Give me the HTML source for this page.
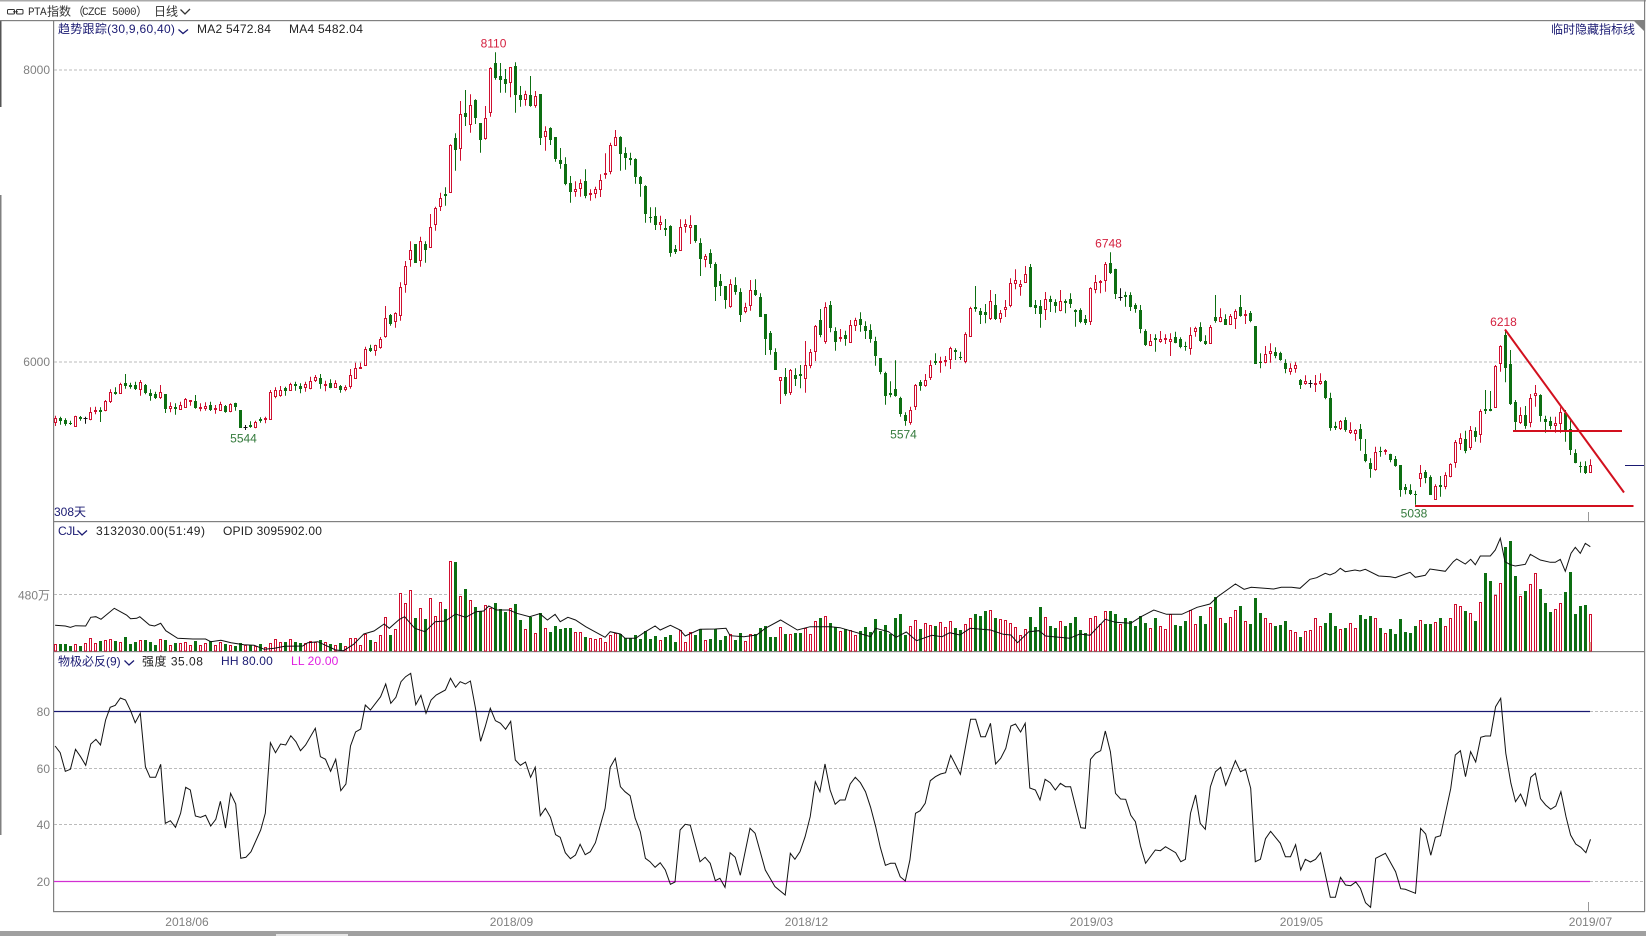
<!DOCTYPE html>
<html lang="zh">
<head>
<meta charset="utf-8">
<title>PTA指数</title>
<style>
html,body{margin:0;padding:0;background:#fff;width:1646px;height:936px;overflow:hidden}
svg{position:absolute;left:0;top:0;display:block}
text{font-family:"Liberation Sans","Noto Sans CJK SC",sans-serif;font-size:12px}
.g{fill:#808080}
.n{fill:#1a1a72}
.d{fill:#222}
.dt{fill:#808080;text-anchor:middle}
.rl{fill:#d4213f;text-anchor:middle}
.gl{fill:#347a3c;text-anchor:middle}
.m{font-family:"Liberation Mono","Noto Sans CJK SC",monospace;font-size:11px;letter-spacing:-.6px;fill:#333}
.c{font-family:"Noto Sans CJK SC",sans-serif;font-size:12px;fill:#333}
</style>
</head>
<body>
<svg width="1646" height="936" viewBox="0 0 1646 936" xmlns="http://www.w3.org/2000/svg">
<rect width="1646" height="936" fill="#fff"/>
<!-- frame -->
<rect x="0" y="0" width="1646" height="1.5" fill="#aaa"/>
<rect x="0" y="931" width="1646" height="5" fill="#a0a0a0"/>
<rect x="276" y="934" width="72" height="2" fill="#e6e6e6"/>
<rect x="0" y="20" width="1.5" height="87" fill="#555"/>
<rect x="0" y="195" width="1.5" height="640" fill="#808080"/>
<rect x="53" y="20" width="1.2" height="891.5" fill="#808080"/>
<rect x="1644" y="0" width="1.2" height="911.5" fill="#808080"/>
<rect x="0" y="20" width="1645" height="1.2" fill="#808080"/>
<rect x="53" y="521" width="1592" height="1.2" fill="#808080"/>
<rect x="53" y="651" width="1592" height="1.2" fill="#808080"/>
<rect x="53" y="911" width="1592" height="1.2" fill="#808080"/>
<polygon points="1634,21 1644,21 1644,31" fill="#808080"/>
<!-- grid -->
<g stroke="#bbb" stroke-width="1" stroke-dasharray="3 2" fill="none">
<path d="M54 70H1644M54 362H1644M54 594.5H1644M54 768.5H1644M54 824.5H1644M1590 711.5H1644M1590 881.5H1644"/>
</g>
<rect x="1588" y="512" width="1" height="9" fill="#999"/>
<rect x="1588" y="902" width="1" height="9" fill="#999"/>
<!-- series -->
<path id="vg" fill="#0d6f12"/>
<path id="vr" fill="#fff" stroke="#cf1030" stroke-width="1"/>
<rect x="1589" y="642" width="1.5" height="9" fill="#b05a30"/>
<path id="volma" fill="none" stroke="#111" stroke-width="1"/>
<path id="wg" stroke="#0d6f12" stroke-width="1" fill="none"/>
<path id="wr" stroke="#cf1030" stroke-width="1" fill="none"/>
<path id="wk" stroke="#111" stroke-width="1" fill="none"/>
<path id="bg" fill="#0d6f12"/>
<path id="br" fill="#fff" stroke="#cf1030" stroke-width="1"/>
<path d="M54 711.5H1590" stroke="#1a1a72" stroke-width="1.2"/>
<path d="M54 881.5H1590" stroke="#d22fd2" stroke-width="1.2"/>
<path id="rsi" fill="none" stroke="#111" stroke-width="1"/>
<!-- drawn lines -->
<g stroke="#d2101e" stroke-width="2" fill="none">
<path d="M1505 329.5L1624 492.5"/>
<path d="M1513 431H1622"/>
<path d="M1415 506H1633.5"/>
</g>
<path d="M1625 465.5H1644" stroke="#1a1a72" stroke-width="1"/>
<!-- top bar -->
<g fill="none" stroke="#333" stroke-width="1">
<rect x="7.5" y="9.5" width="7" height="4.5" rx="1"/>
<rect x="16.5" y="9.5" width="6.5" height="4.5" rx="1"/>
<path d="M13 11.8H18"/>
<path d="M180.5 9.5L185 14L190 9" stroke-width="1.3"/>
</g>
<text x="28" y="15" class="m">PTA</text>
<text x="47" y="15.5" class="c">指数</text>
<text x="72" y="15.5" class="c">（</text>
<text x="82" y="15" class="m">CZCE 5000</text>
<text x="136" y="15.5" class="c">）</text>
<text x="154" y="15.5" class="c">日线</text>
<!-- price header -->
<text x="58" y="33" class="n" style="letter-spacing:.28px">趋势跟踪(30,9,60,40)</text>
<path d="M178.5 29.5L183 33.5L188 29.5" fill="none" stroke="#1a1a72" stroke-width="1.3"/>
<text x="197" y="33" class="d" style="letter-spacing:.25px">MA2 5472.84</text>
<text x="289" y="33" class="d" style="letter-spacing:.25px">MA4 5482.04</text>
<text x="1551" y="33.5" class="n">临时隐藏指标线</text>
<text x="50" y="74" class="g" text-anchor="end">8000</text>
<text x="50" y="366" class="g" text-anchor="end">6000</text>
<text x="54" y="516" class="n">308天</text>
<text x="493.5" y="47.5" class="rl">8110</text>
<text x="1108.5" y="247.5" class="rl">6748</text>
<text x="1503.5" y="326" class="rl">6218</text>
<text x="243.5" y="442.5" class="gl">5544</text>
<text x="903.5" y="438.5" class="gl">5574</text>
<text x="1414" y="517.5" class="gl">5038</text>
<!-- volume header -->
<text x="58" y="535" class="n" style="letter-spacing:-.3px">CJL</text>
<path d="M77.5 530.5L82 535L87 530.5" fill="none" stroke="#1a1a72" stroke-width="1.3"/>
<text x="96" y="535" class="d" style="letter-spacing:.47px">3132030.00(51:49)</text>
<text x="223" y="535" class="d" style="letter-spacing:.2px">OPID 3095902.00</text>
<text x="50" y="599.5" class="g" text-anchor="end">480万</text>
<!-- RSI header -->
<text x="58" y="665.5" class="n">物极必反(9)</text>
<path d="M124.5 660.5L129 665L134 660.5" fill="none" stroke="#1a1a72" stroke-width="1.3"/>
<text x="142" y="665.5" class="d" style="letter-spacing:.5px">强度 35.08</text>
<text x="221" y="665" class="n" style="letter-spacing:.15px">HH 80.00</text>
<text x="291" y="665" style="fill:#e020e0;letter-spacing:.15px">LL 20.00</text>
<text x="50" y="716" class="g" text-anchor="end">80</text>
<text x="50" y="773" class="g" text-anchor="end">60</text>
<text x="50" y="829" class="g" text-anchor="end">40</text>
<text x="50" y="886" class="g" text-anchor="end">20</text>
<!-- dates -->
<text x="187" y="926" class="dt">2018/06</text>
<text x="511.5" y="926" class="dt">2018/09</text>
<text x="806.5" y="926" class="dt">2018/12</text>
<text x="1091.5" y="926" class="dt">2019/03</text>
<text x="1301.5" y="926" class="dt">2019/05</text>
<text x="1590.5" y="926" class="dt">2019/07</text>
</svg>
<script>
var segs=[
[350,"r205,217,197,228 g205,214,200,224 g210,222,205,227 g218,223,212,225 r199,228,197,230 g202,206,198,212 k206,206,200,221 r186,209,172,211 r182,184,170,193 g179,187,172,216 r153,182,150,184 r126,155,118,159 g125,131,112,134 r102,129,98,131 g100,107,72,116 g105,112,98,116 g105,118,95,120 r98,118,90,137 g104,130,102,133 g128,137,118,152 g133,143,125,147 r127,143,105,147 g132,177,132,189 r169,176,157,187 g171,178,160,194 r167,178,155,180 r147,172,144,174 r152,152,150,167 g153,173,135,176 r171,176,160,184 r170,175,157,182 g166,179,155,183 r175,177,165,191 r164,180,155,183 g168,186,165,188 r163,185,160,187 g160,172,158,182 g180,233,180,234 k233,233,225,240 g226,231,214,233 r217,233,212,235 g206,212,202,218 r204,207,200,220 r126,208,120,210 r122,140,112,145 r120,137,108,140 g113,123,110,137 r102,120,98,123 g103,107,95,122 g108,117,100,130 r103,113,95,125 r94,115,80,118 r82,92,75,96 g85,102,72,116 r102,106,92,124 g100,113,88,115"],
[200,"r551,562,541,564 g558,570,555,578 r562,569,556,574 r526,560,507,566 r505,535,488,537 r503,503,488,506 r447,496,440,498 g443,452,434,456 r436,452,434,467 r417,443,411,446 r355,410,318,413 g345,372,342,377 r340,365,337,383 r262,346,247,362 r199,254,183,278 r151,178,124,200 g133,188,133,188"],
[40,"r605,660,590,680 g612,630,604,668 r562,622,522,623 r504,554,500,572 r474,500,458,513 g463,467,442,497 r315,456,313,458 g293,329,280,392 r223,326,183,362 g220,231,150,258 r196,253,163,278 g180,235,178,252 g250,299,250,338 r235,295,198,299 r84,218,82,230 g70,113,37,119 g109,119,69,158 g118,131,87,158 r83,128,82,172 g79,164,67,218 g164,179,138,200 r163,178,152,197 g166,198,108,200 r169,197,153,203 g162,293,162,315 r274,290,259,332 g264,299,262,315 g292,357,292,365 g361,372,324,386 g373,432,352,436 g430,456,408,488 r448,455,424,470 r431,445,418,470 g424,467,388,475 r460,463,448,482 r447,461,440,475 r421,449,403,471 r401,404,340,416 r316,395,308,403 r292,315,270,318 g291,341,289,392 g340,354,322,389 g355,360,338,376 g358,410,355,431 g411,431,408,470 g438,521,436,548 g532,535,502,548 g528,555,502,570 r548,554,527,570 g565,569,537,588 g558,638,556,650 g627,635,615,642 r562,630,538,632 r553,560,538,578 r556,562,526,612 g556,603,555,608 g610,656,595,708 r649,659,642,682 g640,671,628,684"],
[200,"g193,260,187,303 g243,257,222,288 g258,299,258,326 r252,320,238,323 g255,276,232,284 g276,345,265,366 r321,335,308,340 r270,317,240,332 g270,284,238,288 g291,350,280,350 g343,416,343,465 g398,449,393,464 g456,509,445,509 r532,542,532,612 g532,583,504,587 r510,576,507,585 g526,536,505,558"],
[230,"g432,437,405,475 r405,445,333,488 r367,407,357,415 r288,365,285,393 g270,315,237,322 r232,335,217,341 g226,295,213,307 g304,335,292,362 r323,326,297,335 g316,326,302,347 r287,336,270,338 r271,287,263,303 g268,284,247,305 g289,302,274,327 g301,327,283,338 g333,377,320,407 g385,425,385,433 g430,497,425,524 g490,496,454,502 g478,497,391,500 g503,552,500,560 g556,574,547,587 r542,576,530,584 r466,530,462,540 g455,467,450,482 r451,467,432,470 r406,443,391,450 g394,399,370,405 r394,394,380,428 r392,394,378,409 r355,388,350,417 g360,367,355,390 g380,384,365,390 r312,393,307,400 r235,318,230,320 g231,236,168,245 g244,254,234,282 g247,254,222,280 r214,265,180,270 g226,267,192,270 r250,265,240,278 r232,239,210,261 r160,225,145,232 r152,161,118,178 r163,170,150,197 r133,156,108,158 g111,230,102,232 g226,233,210,252 g229,251,210,293 r208,239,186,270 g208,217,197,246 g216,228,208,248 r214,240,180,244 g213,220,208,250 g208,221,190,234 g240,246,238,290 g240,275,235,280 g268,278,255,285 r174,273,172,285 r157,178,135,190 r154,157,150,190 r103,151,96,185 g99,129,67,132 g116,192,116,207 k203,203,175,212 g196,200,185,230 g196,230,187,243 g225,238,220,248 g240,296,225,310 g303,345,298,348 r335,345,312,347 g324,329,313,365 r328,335,303,338 r325,328,313,342 r328,334,310,378 g322,338,305,340 g326,351,322,355 g349,352,335,362 r317,356,292,374 r295,305,290,320 g292,333,277,336 g334,342,316,345 r292,339,285,342 g260,274,195,278 r262,275,235,277 g267,284,253,285 r259,282,252,285 r243,265,238,297 g232,257,195,260 r253,255,240,282 g250,273,243,277 g289,401,289,402 g395,398,370,415 r374,397,348,400 r364,371,340,398 g367,378,352,385 g369,390,365,392 g398,416,388,430 r415,425,400,434 r406,416,397,428 g450,464,447,477 r454,461,436,464 k461,461,450,473 r461,463,435,486 r454,461,430,464"],
[300,"g243,295,240,298 g295,385,278,392 g377,385,365,390 r363,386,360,390 g360,390,352,395 r390,398,367,402 r391,400,388,422 g388,416,372,452 g463,483,417,487 g489,508,475,533 r457,508,440,512 g453,457,440,470 r451,454,447,464 g463,480,461,487 g477,498,468,500 g495,570,495,590 g561,570,552,583 g570,582,553,585 g581,585,572,614 r520,535,495,561 g515,535,510,550 g530,585,526,585 r558,598,553,600 g556,561,528,590 r525,559,517,568 r493,530,490,532 r426,488,420,503 r415,430,400,450 g418,452,392,460 r390,443,378,450 g393,411,382,425 r334,403,328,428 g328,333,270,342 g328,332,273,334 r198,322,195,324 r138,191,136,215 g104,205,90,247 g193,312,150,315 g306,365,300,390 r347,368,322,372 g346,378,318,386 r294,367,282,382 r280,287,255,320 g285,347,283,365 g358,365,347,398 g363,378,350,388 r369,377,350,398 r338,370,322,398 g338,396,330,425 g388,450,360,465 g460,488,448,490 g497,502,485,518 g497,520,484,522 r495,517,478,519"]
];
var vol="252,252,252,258,252,258,250,235,250,243,240,238,243,247,232,251,247,241,241,247,255,238,241,255,249,249,247,255,244,256,250,244,256,247,252,255,257,248,256,256,260,253,261,251,238,247,247,238,247,249,250,244,246,241,247,252,257,250,259,235,235,256,222,240,246,225,172,225,207,100,130,91,175,145,178,114,168,128,148,3,5,108,87,120,141,153,137,145,129,147,155,145,132,180,208,172,220,160,205,216,198,208,205,203,216,216,232,234,238,235,246,225,220,222,235,233,225,238,213,238,228,240,232,226,246,210,246,217,226,207,240,237,207,240,228,222,240,219,245,222,222,205,198,232,232,201,222,222,219,219,205,222,185,175,168,188,200,213,207,210,225,213,200,215,177,212,195,222,175,162,225,198,180,207,189,195,198,186,201,184,205,210,193,175,162,168,153,150,174,177,180,189,201,225,207,171,201,141,171,198,204,183,198,189,171,210,218,175,169,193,153,153,162,192,174,183,198,168,188,204,175,198,207,163,196,198,183,152,192,168,192,141,112,174,189,171,150,138,183,192,114,159,174,189,198,195,183,210,216,232,213,211,174,198,189,159,198,207,204,189,204,165,177,168,174,204,219,207,222,177,216,219,198,180,192,192,186,174,198,174,132,138,153,159,183,126,39,63,105,70,-39,-57,48,108,93,72,39,87,129,156,147,130,96,36,162,138,135,162".split(",").map(Number);
function $(i){return document.getElementById(i)}
var P={wg:"",wr:"",wk:"",bg:"",br:"",vg:"",vr:""},idx=0,f=function(n){return n.toFixed(1)};
function h(n){return (Math.floor(n)+.5).toFixed(1)}
var types=[];
segs.forEach(function(s){
  var y0=s[0];
  s[1].split(" ").forEach(function(c){
    var t=c[0],a=c.slice(1).split(",").map(Number);
    var x=55.5+5*idx,T=y0+a[0]/3,B=y0+a[1]/3,H=y0+a[2]/3,L=y0+a[3]/3;
    types.push(t);
    P["w"+t]+="M"+x+" "+f(H)+"V"+f(L);
    if(t=="k"){P.wk+="M"+(x-2)+" "+h(T)+"H"+(x+2);}
    else if(t=="g"){var gt=Math.round(T),gb=Math.max(Math.round(B),gt+1);P.bg+="M"+(x-1.5)+" "+gt+"H"+(x+1.5)+"V"+gb+"H"+(x-1.5)+"Z";}
    else{var rt=Math.floor(T)+.5,rb=Math.max(Math.floor(B)+.5,rt+1);P.br+="M"+(x-1)+" "+rt+"H"+(x+1)+"V"+rb+"H"+(x-1)+"Z";}
    idx++;
  });
});
vol.forEach(function(z,i){
  var x=55.5+5*i,y=560+z/3,t=types[i]||"g";
  if(t=="g"){P.vg+="M"+(x-1.5)+" "+Math.round(y)+"H"+(x+1.5)+"V651H"+(x-1.5)+"Z";}
  else{P.vr+="M"+(x-1)+" "+(Math.floor(y)+.5)+"H"+(x+1)+"V651H"+(x-1)+"Z";}
});
for(var k in P){$(k).setAttribute("d",P[k]);}
function conv(str,x0,sx,y0){
  return str.split(" ").map(function(p){var a=p.split(",").map(Number);return f(x0+a[0]/sx)+" "+f(y0+a[1]/3);});
}
var r11="10,558 20,578 30,634 40,628 50,568 60,590 70,616 80,552 90,538 99,555 109,480 118,442 128,436 138,414 148,420 158,452 167,488 177,460 187,620 196,652 207,652 217,613 226,790 236,782 246,802 256,760 266,682 275,690 285,768 295,772 305,766 315,798 325,778 334,724 344,804 354,700 364,732 374,895 384,892 394,875 413,810 422,760 432,548 442,578 452,552 462,555 472,527 482,545 491,572 501,555 520,505 530,590 540,598 550,634 560,598 570,692 580,672 589,558 599,516 609,507 618,435 628,450 648,410 658,372 668,430 678,412 688,365 697,350 707,340 717,434 727,406 737,460 747,420 757,405 775,390 785,355 795,382 804,365 814,372 824,363 834,445 844,544 853,500 863,445 873,482 883,490 893,508 903,484 912,600 922,616 932,606 942,652 951,622 961,767 971,745 981,772 991,824 1000,832 1010,878 1020,896 1030,885 1039,853 1049,884 1059,875 1069,848 1088,745 1098,622 1108,595 1118,680 1127,695 1137,707 1147,775 1157,815 1167,895 1176,905 1186,922 1196,908 1206,930 1216,973 1225,966 1235,810 1245,793 1255,796 1274,905 1284,892 1294,910 1304,962 1313,955 1323,982 1333,878 1343,892 1353,946 1372,805 1382,820 1402,930 1421,980 1441,1005 1451,880 1460,898 1470,875 1480,830 1490,770 1500,665 1509,695 1519,612 1529,690 1539,733";
var r12="0,720 10,720 20,672 30,652 40,668 50,695 60,742 70,800 79,862 89,916 99,910 108,910 118,950 128,963 137,900 148,760 157,752 167,730 177,662 187,650 197,642 207,638 217,586 236,643 256,478 266,478 276,530 285,530 295,490 305,612 315,595 325,565 335,498 344,492 354,516 363,490 372,684 383,690 392,720 402,658 412,668 422,690 432,670 442,680 452,680 472,803 481,805 491,598 501,580 511,572 520,513 530,575 540,700 550,717 560,718 570,766 579,785 589,858 599,910 618,870 628,872 638,860 658,878 668,905 677,898 687,760 697,705 706,790 716,808 726,680 736,635 746,622 756,676 775,602 785,635 795,628 805,685 814,905 824,898 834,836 844,814 863,850 873,890 883,890 893,854 903,930 912,898 922,906 932,898 942,878 961,1012 971,1012 981,952 991,975 1001,977 1011,966 1020,985 1030,1028 1040,1042 1050,895 1060,887 1069,880 1089,935 1099,986 1108,988 1128,1000 1138,805 1148,822 1158,886 1167,832 1177,827 1187,757 1197,686 1206,585 1216,572 1226,650 1236,575 1246,606 1256,532 1265,528 1275,528 1285,440 1295,415 1305,580 1315,670 1324,725 1334,702 1344,737 1354,652 1363,640 1373,716 1383,735 1393,748 1403,738 1413,695 1423,770 1432,825 1442,852 1452,862 1462,878 1471,838";
$("rsi").setAttribute("d","M"+conv(r11,50,1.96,560).concat(conv(r12,840,1.96,560)).join("L"));
var v11="10,196 30,198 40,202 50,197 70,198 80,172 90,170 100,178 126,145 150,165 158,176 170,175 176,170 195,195 205,198 217,190 227,212 250,235 280,237 305,237 315,245 335,241 355,248 380,254 400,256 420,268 440,265 460,259 495,258 505,248 525,245 540,256 560,270 575,272 595,253 615,222 635,213 655,192 665,205 685,178 695,170 715,205 735,215 755,185 775,183 795,162 815,172 835,155 850,153 860,138 875,150 900,150 915,160 940,170 960,161 975,180 990,163 1000,185 1015,172 1030,180 1050,200 1088,232 1098,215 1118,222 1127,235 1148,235 1167,215 1186,198 1196,210 1216,196 1235,210 1245,228 1274,208 1304,207 1325,205 1333,227 1360,230 1385,225 1402,205 1432,180 1465,210 1490,200 1530,200";
var v12="0,203 20,212 60,230 70,205 95,215 110,232 130,216 150,242 180,226 200,230 215,218 235,225 255,205 295,210 320,223 335,225 348,248 370,215 390,212 403,228 450,235 470,222 490,226 503,205 520,178 540,187 570,190 590,170 615,150 640,163 670,163 700,142 725,132 740,110 775,72 792,88 806,82 850,87 865,82 885,82";
var v4="0,175 30,148 50,143 76,130 90,135 106,128 121,115 136,125 165,120 180,123 196,118 236,138 271,140 286,143 330,127 346,142 376,136 390,117 436,124 460,95 470,87 496,102 512,88 526,104 541,78 571,78 586,60 601,25 615,95 631,104 646,108 676,103 691,73 721,90 751,97 766,97 781,88 796,124 813,70 826,52 841,70 856,40 871,50";
$("volma").setAttribute("d","M"+conv(v11,50,1.96,560).concat(conv(v12,840,1.96,560)).concat(conv(v4,1300,3,530)).join("L"));
</script>
</body>
</html>
